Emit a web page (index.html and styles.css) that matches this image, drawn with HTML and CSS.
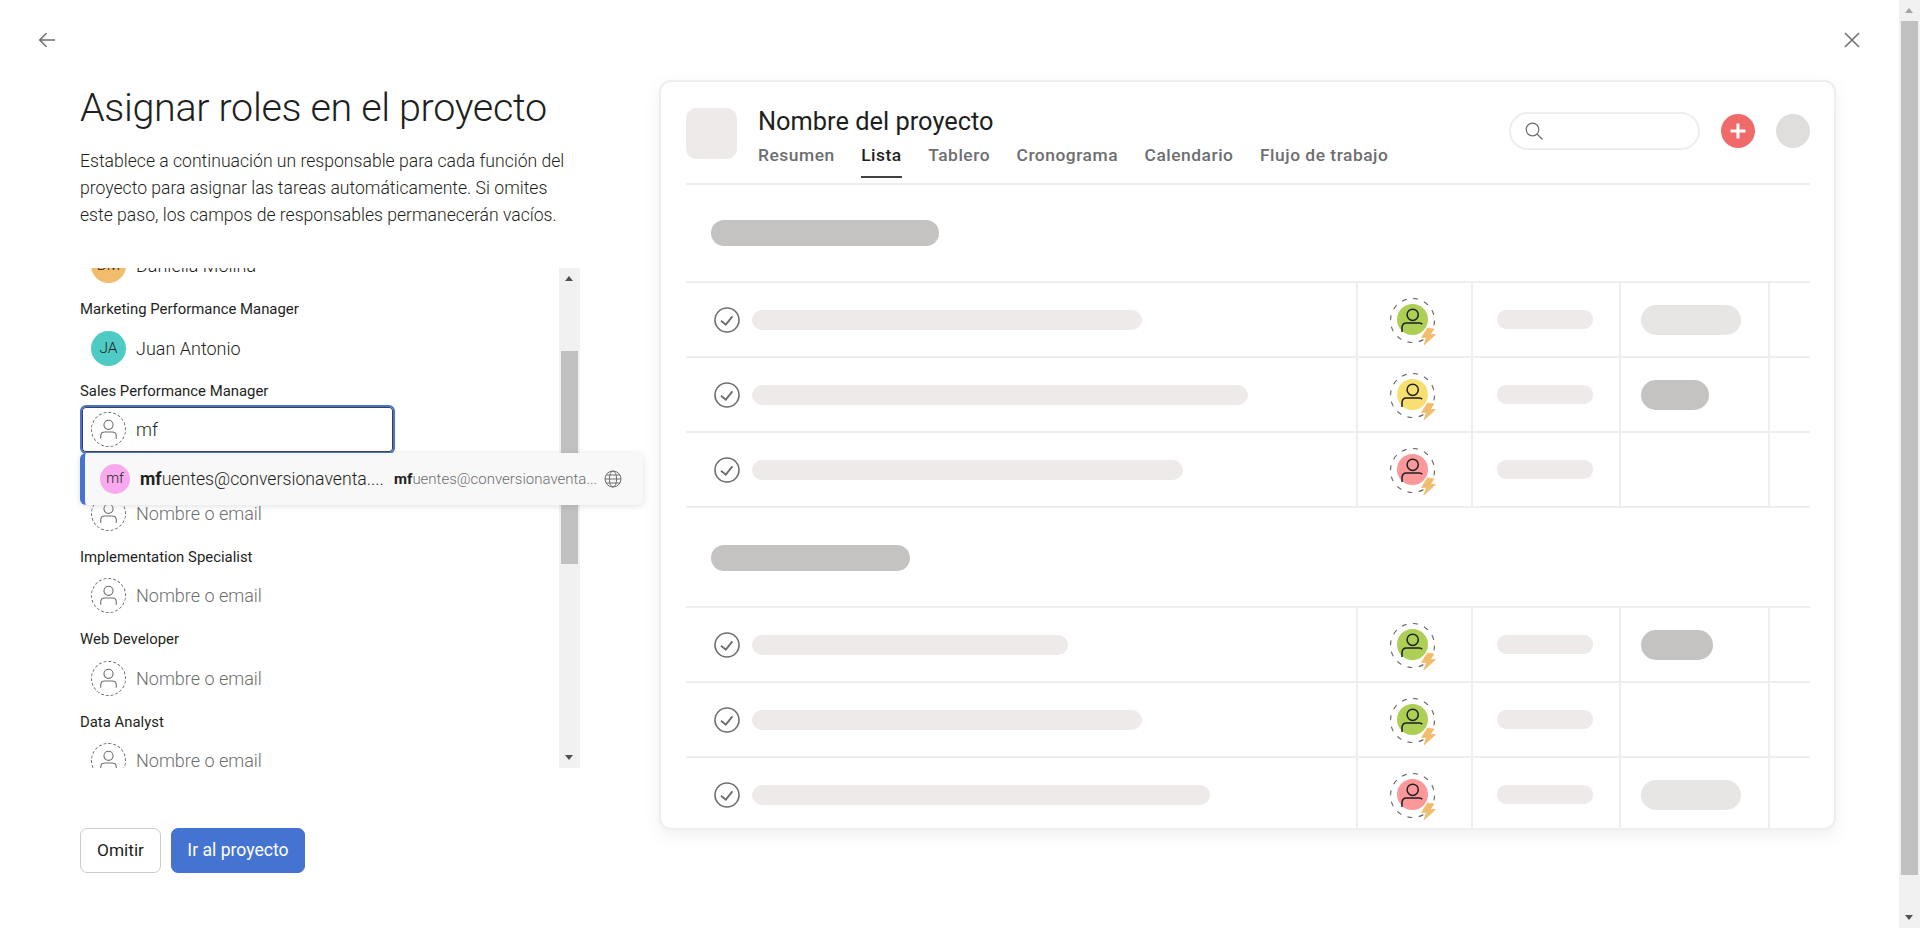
FILE: index.html
```html
<!DOCTYPE html>
<html lang="es">
<head>
<meta charset="utf-8">
<title>Asignar roles en el proyecto</title>
<link rel="stylesheet" href="styles.css">
</head>
<body>
<svg width="0" height="0" class="defs">
  <symbol id="person" viewBox="0 0 32 32"><circle cx="16" cy="10.5" r="5.4" fill="none" stroke="currentColor" stroke-width="1.3"/><path d="M6.8 27v-3.5c0-3 2.2-4.6 5-4.6h8.4c2.8 0 5 1.6 5 4.6V27" fill="none" stroke="currentColor" stroke-width="1.3"/></symbol>
  <symbol id="person-dark" viewBox="0 0 31 31"><circle cx="15.7" cy="10.8" r="5.6" fill="none" stroke="#1e1f21" stroke-width="1.5"/><path d="M5 28v-4c0-3 1.8-5 4.5-5h12.8c1.300 0 2.300.4 2.900 1.200" fill="none" stroke="#1e1f21" stroke-width="1.5"/></symbol>
  <symbol id="check" viewBox="0 0 26 26"><circle cx="13" cy="13" r="12" fill="none" stroke="#6d6e6f" stroke-width="1.6"/><path d="M7 13.700l4.800 4 6.600-8.300" fill="none" stroke="#6d6e6f" stroke-width="1.900"/></symbol>
  <symbol id="assignee" viewBox="0 0 46 48"><circle cx="22.500" cy="22.500" r="22" fill="none" stroke="#6d6e6f" stroke-width="1.200" stroke-dasharray="5 6.500"/><path d="M37.500 30l-6 9.500h5l-2.500 7.500 11.500-10.500h-5.500l4-5.500z" fill="#f1bd6c" stroke="#f1bd6c" stroke-width=".8" stroke-linejoin="round"/></symbol>
</svg>
<div class="page">
  <main class="main">
    <header class="topbar">
      <svg class="nav-icon" viewBox="0 0 20 20"><path d="M18 10H3M9.500 3.200L2.700 10l6.800 6.800" fill="none" stroke="#6d6e6f" stroke-width="1.500"/></svg>
      <svg class="nav-icon" viewBox="0 0 20 20"><path d="M3 3l14 14M17 3L3 17" fill="none" stroke="#6d6e6f" stroke-width="1.500"/></svg>
    </header>
    <div class="content">
      <section class="form">
        <h1>Asignar roles en el proyecto</h1>
        <p class="intro">Establece a continuación un responsable para cada función del proyecto para asignar las tareas automáticamente. Si omites este paso, los campos de responsables permanecerán vacíos.</p>
        <div class="list-box">
          <div class="list-view">
            <div class="list">
              <div class="role first"><div class="label">Product Manager</div><div class="field"><span class="avatar orange">DM</span><span class="name">Daniella Molina</span></div></div>
              <div class="role"><div class="label">Marketing Performance Manager</div><div class="field"><span class="avatar teal">JA</span><span class="name">Juan Antonio</span></div></div>
              <div class="role"><div class="label">Sales Performance Manager</div>
                <div class="field focused"><span class="avatar empty"><svg class="person"><use href="#person"/></svg></span><span class="name">mf</span></div>
              </div>
              <div class="role"><div class="label">Project Manager</div><div class="field"><span class="avatar empty"><svg class="person"><use href="#person"/></svg></span><span class="name ph">Nombre o email</span></div></div>
              <div class="role"><div class="label">Implementation Specialist</div><div class="field"><span class="avatar empty"><svg class="person"><use href="#person"/></svg></span><span class="name ph">Nombre o email</span></div></div>
              <div class="role"><div class="label">Web Developer</div><div class="field"><span class="avatar empty"><svg class="person"><use href="#person"/></svg></span><span class="name ph">Nombre o email</span></div></div>
              <div class="role"><div class="label">Data Analyst</div><div class="field"><span class="avatar empty"><svg class="person"><use href="#person"/></svg></span><span class="name ph">Nombre o email</span></div></div>
            </div>
            <div class="menu">
              <span class="avatar small pink">mf</span>
              <span class="menu-name"><b>mf</b>uentes@conversionaventa....</span>
              <span class="menu-mail"><b>mf</b>uentes@conversionaventa...</span>
              <svg class="globe" viewBox="0 0 18 18"><g fill="none" stroke="#6d6e6f" stroke-width="1"><circle cx="9" cy="9" r="8"/><ellipse cx="9" cy="9" rx="3.600" ry="8"/><path d="M1 9h16M2 5h14M2 13h14"/></g></svg>
            </div>
          </div>
          <div class="vscroll">
            <span class="arrow up"></span>
            <span class="track"><span class="thumb"></span></span>
            <span class="arrow down"></span>
          </div>
        </div>
        <div class="actions">
          <button class="btn skip">Omitir</button>
          <button class="btn primary">Ir al proyecto</button>
        </div>
      </section>
      <section class="card">
        <div class="card-head">
          <div class="tile"></div>
          <div class="head-text">
            <div class="project">Nombre del proyecto</div>
            <nav class="tabs"><span>Resumen</span><span class="active">Lista</span><span>Tablero</span><span>Cronograma</span><span>Calendario</span><span>Flujo de trabajo</span></nav>
          </div>
          <div class="head-tools">
            <div class="search"><svg viewBox="0 0 18 18"><circle cx="7.500" cy="7.500" r="6.300" fill="none" stroke="#6d6e6f" stroke-width="1.200"/><path d="M12 12l5.500 5.500" stroke="#6d6e6f" stroke-width="1.200"/></svg></div>
            <div class="plus"><svg viewBox="0 0 18 18"><path d="M9 1.500v15M1.500 9h15" stroke="#fff" stroke-width="3"/></svg></div>
            <div class="user"></div>
          </div>
        </div>
        <div class="pill-row"><span class="section-pill w1"></span></div>
        <div class="table">
          <div class="row"><div class="c-task"><svg class="check"><use href="#check"/></svg><span class="bar" style="width:390px"></span></div><div class="c-who"><span class="who green"><svg class="ring"><use href="#assignee"/></svg><svg class="person-dark"><use href="#person-dark"/></svg></span></div><div class="c-date"><span class="date"></span></div><div class="c-tag"><span class="tag" style="width:100px"></span></div><div class="c-end"></div></div>
          <div class="row"><div class="c-task"><svg class="check"><use href="#check"/></svg><span class="bar" style="width:496px"></span></div><div class="c-who"><span class="who yellow"><svg class="ring"><use href="#assignee"/></svg><svg class="person-dark"><use href="#person-dark"/></svg></span></div><div class="c-date"><span class="date"></span></div><div class="c-tag"><span class="tag dark" style="width:68px"></span></div><div class="c-end"></div></div>
          <div class="row"><div class="c-task"><svg class="check"><use href="#check"/></svg><span class="bar" style="width:431px"></span></div><div class="c-who"><span class="who red"><svg class="ring"><use href="#assignee"/></svg><svg class="person-dark"><use href="#person-dark"/></svg></span></div><div class="c-date"><span class="date"></span></div><div class="c-tag"></div><div class="c-end"></div></div>
        </div>
        <div class="pill-row second"><span class="section-pill w2"></span></div>
        <div class="table last">
          <div class="row"><div class="c-task"><svg class="check"><use href="#check"/></svg><span class="bar" style="width:316px"></span></div><div class="c-who"><span class="who green"><svg class="ring"><use href="#assignee"/></svg><svg class="person-dark"><use href="#person-dark"/></svg></span></div><div class="c-date"><span class="date"></span></div><div class="c-tag"><span class="tag dark" style="width:72px"></span></div><div class="c-end"></div></div>
          <div class="row"><div class="c-task"><svg class="check"><use href="#check"/></svg><span class="bar" style="width:390px"></span></div><div class="c-who"><span class="who green"><svg class="ring"><use href="#assignee"/></svg><svg class="person-dark"><use href="#person-dark"/></svg></span></div><div class="c-date"><span class="date"></span></div><div class="c-tag"></div><div class="c-end"></div></div>
          <div class="row"><div class="c-task"><svg class="check"><use href="#check"/></svg><span class="bar" style="width:458px"></span></div><div class="c-who"><span class="who red"><svg class="ring"><use href="#assignee"/></svg><svg class="person-dark"><use href="#person-dark"/></svg></span></div><div class="c-date"><span class="date"></span></div><div class="c-tag"><span class="tag" style="width:100px"></span></div><div class="c-end"></div></div>
        </div>
      </section>
    </div>
  </main>
  <aside class="page-scroll">
    <span class="arrow up pale"></span>
    <span class="page-track"><span class="page-thumb"></span></span>
    <span class="arrow down"></span>
  </aside>
</div>
</body>
</html>
```
FILE: styles.css
```css
* { box-sizing: border-box; }
html, body { margin: 0; height: 100%; overflow: hidden; background: #fff; }
body { font-family: Roboto, "Liberation Sans", sans-serif; color: #1e1f21; }
.defs { position: absolute; }
.page { display: flex; height: 928px; }
.main { flex: 1; min-width: 0; }

.topbar { display: flex; justify-content: space-between; height: 80px; padding: 30px 37px 0 37px; }
.nav-icon { width: 20px; height: 20px; }

.content { display: flex; padding-left: 80px; }
.form { width: 579px; flex: none; }
h1 { margin: 5.5px 0 0; font-size: 39.5px; line-height: 44px; font-weight: 300; color: #1e1f21; letter-spacing: -.35px; white-space: nowrap; }
.intro { margin: 18px 0 0; width: 490px; font-size: 17.6px; line-height: 27.4px; font-weight: 300; color: #1e1f21; }

.list-box { display: flex; height: 500px; margin-top: 38px; }
.list-view { position: relative; width: 479px; }
.list { height: 500px; overflow: hidden; }
.role { height: 82.6px; }
.first { margin-top: -54.6px; }
.label { font-size: 14.9px; line-height: 26px; height: 27.8px; white-space: nowrap; color: #1e1f21; }
.field { display: flex; align-items: center; width: 315px; height: 49px; padding-left: 10px; gap: 10px; border-radius: 6px; border: 1px solid transparent; }
.focused { margin-top: -1px; border: 2px solid #4573d2; padding-left: 9px; box-shadow: inset 0 0 0 1px #424244; }
.avatar { display: flex; flex: none; align-items: center; justify-content: center; width: 35px; height: 35px; border-radius: 50%; font-size: 15.5px; color: #1e1f21; font-weight: 300; }
.orange { background: #f1bd6c; }
.teal { background: #4ecbc4; }
.pink { background: #f9aaef; }
.small { width: 30px; height: 30px; font-size: 14.5px; }
.empty { border: 1px dashed #6d6e6f; color: #6d6e6f; }
.person { width: 27px; height: 27px; }
.name { font-size: 18px; font-weight: 300; }
.ph { color: #6d6e6f; }

.menu { position: absolute; top: 185px; left: 0; display: flex; align-items: center; width: 563px; height: 52px; padding: 0 21px 0 15px; background: #f9f8f8; border-left: 5px solid #4573d2; border-radius: 6px; box-shadow: 0 1px 6px rgba(109,110,111,.22); white-space: nowrap; }
.menu-name { margin-left: 10px; width: 254px; font-size: 17.7px; font-weight: 300; overflow: hidden; }
.menu-mail { width: 210px; font-size: 15px; color: #6d6e6f; font-weight: 300; overflow: hidden; }
.menu-name b, .menu-mail b { font-weight: 700; color: #1e1f21; }
.globe { width: 18px; height: 18px; flex: none; }

.vscroll, .page-scroll { display: flex; flex-direction: column; align-items: center; background: #f1f1f1; width: 21px; flex: none; }
.arrow { flex: none; display: block; height: 21px; width: 100%; position: relative; }
.arrow::after { content: ""; position: absolute; left: 6px; border-left: 4.5px solid transparent; border-right: 4.5px solid transparent; }
.up::after { top: 8px; border-bottom: 5px solid #505050; }
.down::after { top: 8px; border-top: 5px solid #505050; }
.pale::after { border-bottom-color: #a3a3a3; }
.track { flex: 1; width: 100%; padding: 0 2px; display: block; }
.thumb { display: block; height: 213px; margin-top: 62px; background: #c1c1c1; }
.page-track { flex: 1; width: 100%; padding: 0 2px; display: block; }
.page-thumb { display: block; height: 854px; background: #c1c1c1; }

.actions { display: flex; gap: 10px; margin-top: 60px; }
.btn { height: 45px; padding: 0; font: 400 17.3px Roboto, "Liberation Sans", sans-serif; border: 1px solid #cfcbcb; background: #fff; color: #1e1f21; border-radius: 7px; }
.skip { width: 81px; }
.primary { width: 134px; background: #4573d2; border-color: #4573d2; color: #fff; font-size: 17.6px; }

.card { width: 1177px; height: 750px; flex: none; padding: 26px 24px 0 25px; background: #fff; border: 2px solid #f0eded; border-radius: 12px; box-shadow: 0 6px 16px rgba(109,110,111,.1); overflow: hidden; }
.card-head { display: flex; height: 77px; border-bottom: 2px solid #f0eded; }
.tile { width: 51px; height: 51px; border-radius: 10px; background: #eeeaea; }
.head-text { margin-left: 21px; flex: 1; }
.project { font: 400 25.4px/30px Roboto, sans-serif; height: 30px; margin-top: -2px; color: #1e1f21; white-space: nowrap; }
.tabs { display: flex; gap: 26.5px; margin-top: 7px; font: 500 17.4px/24px Roboto, sans-serif; color: #6d6e6f; letter-spacing: .52px; }
.tabs span { display: block; height: 39px; padding-top: 4px; margin-top: -4px; }
.tabs .active { color: #1e1f21; border-bottom: 2px solid #424244; }
.head-tools { display: flex; align-items: flex-start; gap: 21px; margin-top: 4px; }
.search { display: flex; align-items: center; width: 191px; height: 38px; padding-left: 14px; border: 2px solid #f0eded; border-radius: 19px; }
.search svg { width: 18px; height: 18px; }
.plus { display: flex; align-items: center; justify-content: center; width: 34px; height: 34px; margin-top: 2px; border-radius: 50%; background: #f06a6a; }
.plus svg { width: 18px; height: 18px; }
.user { width: 34px; height: 34px; margin-top: 2px; border-radius: 50%; background: #dfdedd; }

.pill-row { display: flex; align-items: center; height: 96px; padding-left: 25px; }
.pill-row.second { height: 98px; padding-top: 2px; }
.section-pill { display: block; height: 26px; border-radius: 13px; background: #c4c3c1; }
.w1 { width: 228px; }
.w2 { width: 199px; }

.row { display: flex; height: 75px; border-top: 2px solid #f0eded; }
.table { border-bottom: 2px solid #f0eded; }
.table.last { border-bottom: 0; }
.row > div { display: flex; align-items: center; }
.row > div + div { border-left: 2px solid #f0eded; }
.c-task { width: 670px; padding-left: 28px; }
.c-who { width: 114.5px; padding-left: 39px; }
.c-date { width: 148px; padding-left: 24px; }
.c-tag { width: 149px; padding-left: 20px; }
.c-end { width: 42px; }
.check { width: 26px; height: 26px; flex: none; }
.bar { display: block; height: 20px; margin-left: 12px; border-radius: 10px; background: #eeeaea; }
.who { position: relative; display: flex; align-items: center; justify-content: center; width: 31px; height: 31px; border-radius: 50%; }
.person-dark { width: 31px; height: 31px; }
.ring { position: absolute; left: -7px; top: -6px; width: 46px; height: 48px; }
.green { background: #aecf55; }
.yellow { background: #f8df72; }
.red { background: #fc979a; }
.date { display: block; width: 96px; height: 19px; border-radius: 9px; background: #eeeaea; }
.tag { display: block; height: 30px; border-radius: 15px; background: #e8e5e5; }
.tag.dark { background: #c4c3c1; }
```
